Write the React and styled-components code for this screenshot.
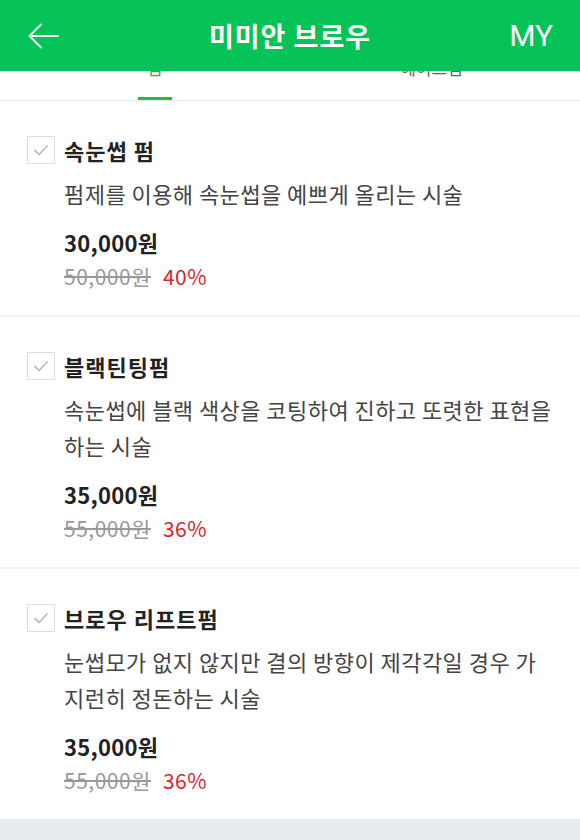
import styled, { createGlobalStyle } from "styled-components";

const GlobalStyle = createGlobalStyle`
  body {
    margin: 0;
    background: #ffffff;
    font-family: "Noto Sans CJK KR", "Noto Sans", sans-serif;
  }
`;

const GREEN = "#06c358";

const Page = styled.div`
  display: flex;
  flex-direction: column;
  min-height: 840px;
  background: #e9ecef;
`;

const Header = styled.header`
  position: relative;
  z-index: 2;
  height: 71px;
  background: ${GREEN};
  display: grid;
  grid-template-columns: 80px 1fr 80px;
  align-items: center;
  color: #fff;
`;

const BackButton = styled.button`
  border: 0;
  background: none;
  padding: 0 0 0 28px;
  height: 71px;
  display: flex;
  align-items: center;
  cursor: pointer;
`;

const Title = styled.h1`
  margin: 0;
  text-align: center;
  font-size: 27px;
  font-weight: 700;
  letter-spacing: 1px;
  line-height: 71px;
`;

const MyLink = styled.span`
  justify-self: end;
  padding-right: 27px;
  font-family: Roboto, "Liberation Sans", sans-serif;
  font-size: 30px;
  line-height: 71px;
`;

const TabBar = styled.nav`
  margin-top: -26px;
  height: 55px;
  background: #fff;
  border-bottom: 1px solid #e8e8e8;
  display: grid;
  grid-template-columns: 277px 277px;
  padding: 0 10px 0 16px;
`;

const Tab = styled.div`
  display: flex;
  flex-direction: column;
  align-items: center;
  justify-content: space-between;
  padding-top: 11px;
`;

const TabLabel = styled.span`
  font-size: 17px;
  line-height: 24px;
  color: ${(p) => (p.active ? "#22b14c" : "#666")};
`;

const Indicator = styled.span`
  width: 34px;
  height: 3px;
  background: ${(p) => (p.active ? "#2cb54f" : "transparent")};
`;

const List = styled.ul`
  list-style: none;
  margin: 0;
  padding: 0;
  background: #fff;
`;

const Item = styled.li`
  padding: 34px 24px 22px 27px;
  border-bottom: ${(p) => (p.last ? "0" : "2px solid #f1f2f3")};
`;

const TitleRow = styled.label`
  display: flex;
  align-items: center;
  gap: 9px;
  height: 30px;
`;

const CheckBox = styled.span`
  width: 28px;
  height: 28px;
  box-sizing: border-box;
  border: 1px solid #dcdcdc;
  display: flex;
  align-items: center;
  justify-content: center;
  flex-shrink: 0;
`;

const ItemTitle = styled.span`
  font-size: 22px;
  font-weight: 700;
  letter-spacing: 1px;
  color: #222;
`;

const Body = styled.div`
  padding-left: 37px;
`;

const Desc = styled.p`
  margin: 10px 0 0;
  font-size: 22px;
  letter-spacing: 0.45px;
  line-height: 36px;
  color: #444;
`;

const Price = styled.div`
  margin-top: 14px;
  font-size: 22px;
  font-weight: 700;
  letter-spacing: 0.3px;
  line-height: 34px;
  color: #222;
`;

const OrigRow = styled.div`
  display: flex;
  gap: 12px;
  line-height: 34px;
  font-size: 21px;
  letter-spacing: 0.5px;
`;

const Orig = styled.s`
  color: #999;
`;

const Discount = styled.span`
  color: #d9252b;
`;

const Footer = styled.div`
  flex: 1;
  background: #e9ecef;
`;

const items = [
  {
    title: "속눈썹 펌",
    desc: "펌제를 이용해 속눈썹을 예쁘게 올리는 시술",
    price: "30,000원",
    orig: "50,000원",
    rate: "40%",
  },
  {
    title: "블랙틴팅펌",
    desc: "속눈썹에 블랙 색상을 코팅하여 진하고 또렷한 표현을 하는 시술",
    price: "35,000원",
    orig: "55,000원",
    rate: "36%",
  },
  {
    title: "브로우 리프트펌",
    desc: "눈썹모가 없지 않지만 결의 방향이 제각각일 경우 가지런히 정돈하는 시술",
    price: "35,000원",
    orig: "55,000원",
    rate: "36%",
  },
];

const App = () => {
  return (
    <Page>
      <GlobalStyle />
      <Header>
        <BackButton aria-label="back">
          <svg width="31" height="26" viewBox="0 0 31 26" fill="none">
            <path
              d="M30 13H2M13 1.5L1.5 13L13 24.5"
              stroke="#fff"
              strokeWidth="1.8"
              strokeLinecap="round"
              strokeLinejoin="round"
            />
          </svg>
        </BackButton>
        <Title>미미안 브로우</Title>
        <MyLink>MY</MyLink>
      </Header>
      <TabBar>
        <Tab>
          <TabLabel active>펌</TabLabel>
          <Indicator active />
        </Tab>
        <Tab>
          <TabLabel>헤어스펌</TabLabel>
          <Indicator />
        </Tab>
      </TabBar>
      <List>
        {items.map((it, i) => (
          <Item key={it.title} last={i === items.length - 1}>
            <TitleRow>
              <CheckBox>
                <svg width="16" height="12" viewBox="0 0 16 12" fill="none">
                  <path
                    d="M1.5 6L6 10.5L14.5 1.5"
                    stroke="#bdbdbd"
                    strokeWidth="1.8"
                  />
                </svg>
              </CheckBox>
              <ItemTitle>{it.title}</ItemTitle>
            </TitleRow>
            <Body>
              <Desc>{it.desc}</Desc>
              <Price>{it.price}</Price>
              <OrigRow>
                <Orig>{it.orig}</Orig>
                <Discount>{it.rate}</Discount>
              </OrigRow>
            </Body>
          </Item>
        ))}
      </List>
      <Footer />
    </Page>
  );
};

export default App;
